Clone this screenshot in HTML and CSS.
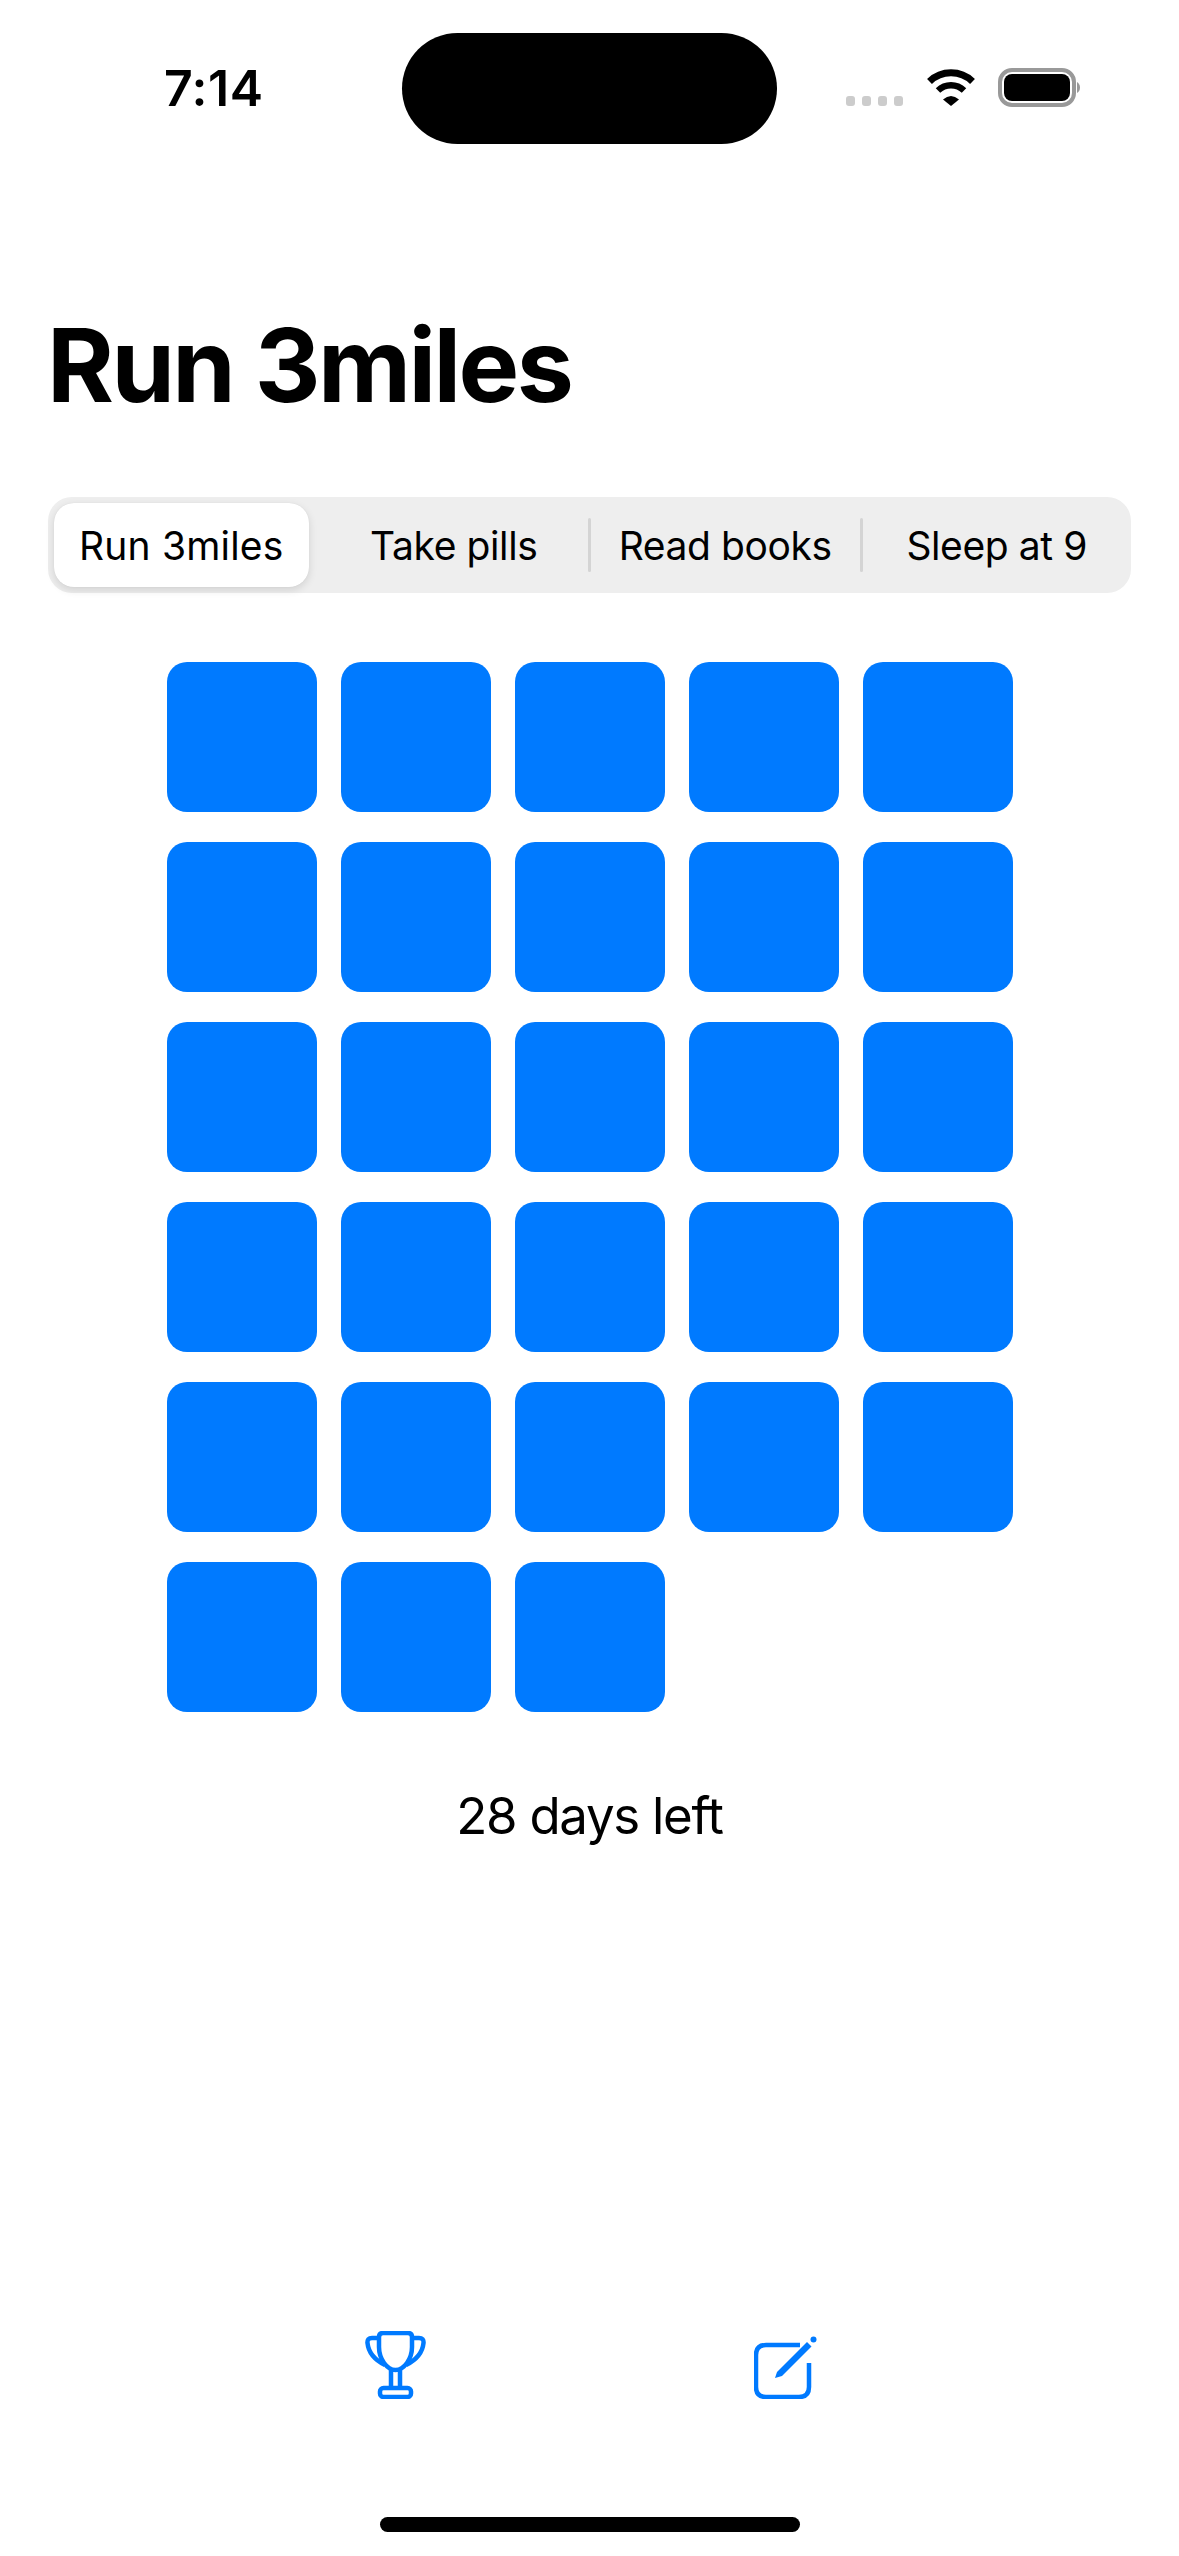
FILE: index.html
```html
<!DOCTYPE html>
<html lang="en">
<head>
    <meta charset="UTF-8">
    <meta name="viewport" content="width=device-width, initial-scale=1.0">
    <title>Run 3miles</title>
    <link rel="stylesheet" href="styles.css">
</head>
<body>
    <div class="page">
        <div class="status-bar">
            <div class="time">7:14</div>
            <div class="island"></div>
            <div class="status-icons">
                <div class="signal">
                    <span class="dot"></span>
                    <span class="dot"></span>
                    <span class="dot"></span>
                    <span class="dot"></span>
                </div>
                <svg class="wifi" width="50" height="37" viewBox="0 0 50 37">
                    <path d="M3.5 12.5A31 31 0 0 1 46.5 12.5" fill="none" stroke="#000" stroke-width="7"/>
                    <path d="M12 21.5A19 19 0 0 1 38 21.5" fill="none" stroke="#000" stroke-width="6.5"/>
                    <path d="M17 30.5Q25 23.5 33 30.5L25 37Z" fill="#000"/>
                </svg>
                <svg class="battery" width="82" height="39" viewBox="0 0 82 39">
                    <rect x="2" y="2" width="74" height="35" rx="12" fill="none" stroke="#999" stroke-width="4"/>
                    <rect x="6" y="6" width="66" height="27" rx="8" fill="#000"/>
                    <path d="M79 14Q82 16 82 19.5Q82 23 79 25Z" fill="#999"/>
                </svg>
            </div>
        </div>

        <h1 class="title">Run 3miles</h1>

        <div class="segments">
            <div class="segment"><div class="thumb">Run 3miles</div></div>
            <div class="divider hidden"></div>
            <div class="segment">Take pills</div>
            <div class="divider"></div>
            <div class="segment">Read books</div>
            <div class="divider"></div>
            <div class="segment">Sleep at 9</div>
        </div>

        <div class="days-grid">
            <div class="day"></div><div class="day"></div><div class="day"></div><div class="day"></div><div class="day"></div>
            <div class="day"></div><div class="day"></div><div class="day"></div><div class="day"></div><div class="day"></div>
            <div class="day"></div><div class="day"></div><div class="day"></div><div class="day"></div><div class="day"></div>
            <div class="day"></div><div class="day"></div><div class="day"></div><div class="day"></div><div class="day"></div>
            <div class="day"></div><div class="day"></div><div class="day"></div><div class="day"></div><div class="day"></div>
            <div class="day"></div><div class="day"></div><div class="day"></div>
        </div>

        <div class="days-left">28 days left</div>

        <div class="toolbar">
            <svg class="trophy" width="61" height="68" viewBox="0 0 61 68" fill="none" stroke="#007aff" stroke-width="4.5">
                <path d="M14 6Q14 2 18 2H43Q47 2 47 6V16C47 28 39 39 30.500 39C22 39 14 28 14 16Z"/>
                <path d="M14 7H7Q2 7 2.500 12C3.500 22 10 29 20 34"/>
                <path d="M47 7H54Q59 7 58.500 12C57.500 22 51 29 41 34"/>
                <path d="M26 39V57M35 39V57"/>
                <rect x="15" y="57" width="31" height="9" rx="3.500"/>
            </svg>
            <svg class="compose" width="63" height="63" viewBox="0 0 63 63">
                <path d="M46 9H12Q2 9 2 19V51Q2 61 12 61H45Q55 61 55 51V27" fill="none" stroke="#007aff" stroke-width="4.5"/>
                <path d="M21 42L23 36L53 6L57.500 10.500L28 40Z" fill="#007aff"/>
                <circle cx="59.500" cy="3.500" r="3" fill="#007aff"/>
            </svg>
        </div>

        <div class="home-indicator"></div>
    </div>
</body>
</html>
```

FILE: styles.css
```css
body {
    margin: 0;
    background-color: #ffffff;
    color: #000000;
    font-family: Inter, "Liberation Sans", sans-serif;
}

.page {
    height: 2556px;
    display: flex;
    flex-direction: column;
    overflow: hidden;
}

/* status bar */
.status-bar {
    display: flex;
    align-items: flex-start;
    height: 144px;
    padding-top: 33px;
    box-sizing: border-box;
}

.time {
    width: 99px;
    margin-left: 164px;
    margin-top: 25px;
    font-size: 50px;
    font-weight: 600;
    line-height: 60px;
    letter-spacing: 0.5px;
    white-space: nowrap;
}

.island {
    width: 375px;
    height: 111px;
    margin-left: 139px;
    border-radius: 56px;
    background-color: #000000;
}

.status-icons {
    display: flex;
    align-items: flex-end;
    margin-left: 69px;
    margin-top: 35px;
}

.signal {
    display: flex;
    gap: 7px;
    padding-bottom: 1px;
}

.dot {
    width: 9px;
    height: 10px;
    border-radius: 3px;
    background-color: #cccccc;
}

.wifi {
    margin-left: 23px;
    margin-bottom: 1px;
}

.battery {
    margin-left: 22px;
}

/* title */
.title {
    margin: 161px 0 0 47px;
    font-size: 102px;
    font-weight: 700;
    line-height: 120px;
    letter-spacing: -2.6px;
}

/* segmented control */
.segments {
    display: flex;
    align-items: center;
    width: 1083px;
    height: 96px;
    margin: 72px 0 0 48px;
    border-radius: 24px;
    background-color: #eeeeee;
}

.segment {
    flex: 1 1 0;
    min-width: 0;
    display: flex;
    align-items: center;
    justify-content: center;
    height: 84px;
    font-size: 39px;
    letter-spacing: -0.4px;
    white-space: nowrap;
}

.thumb {
    flex: 1;
    align-self: stretch;
    display: flex;
    align-items: center;
    justify-content: center;
    margin: 0 8px 0 6px;
    border-radius: 20px;
    background-color: #ffffff;
    box-shadow: 0 3px 8px rgba(0, 0, 0, 0.12), 0 0 1px rgba(0, 0, 0, 0.1);
    letter-spacing: 0.2px;
}

.divider {
    width: 3px;
    height: 54px;
    border-radius: 2px;
    background-color: #d4d4d4;
}

.divider.hidden {
    background-color: transparent;
}

/* grid of days */
.days-grid {
    display: grid;
    grid-template-columns: repeat(5, 150px);
    gap: 30px 24px;
    justify-content: center;
    margin-top: 69px;
}

.day {
    height: 150px;
    border-radius: 20px;
    background-color: #007aff;
}

.days-left {
    margin-top: 73px;
    font-size: 51px;
    line-height: 62px;
    letter-spacing: -1.3px;
    text-align: center;
}

/* bottom toolbar */
.toolbar {
    display: flex;
    align-items: flex-end;
    justify-content: center;
    gap: 328px;
    margin-top: auto;
    padding-left: 3px;
}

.home-indicator {
    width: 420px;
    height: 15px;
    margin: 118px auto 24px;
    border-radius: 8px;
    background-color: #000000;
}
```
